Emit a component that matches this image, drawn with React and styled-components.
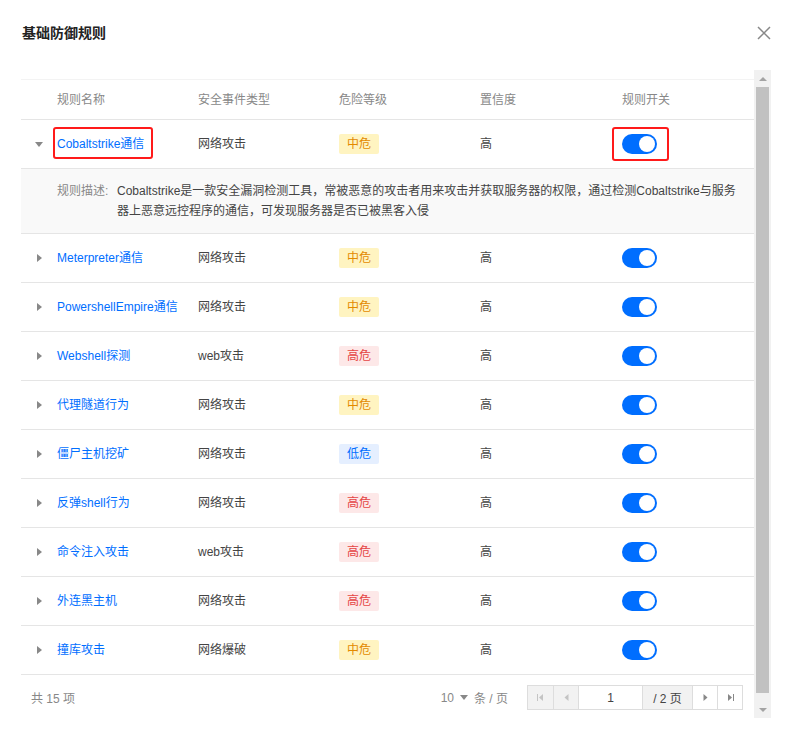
import React from 'react';
import styled, { createGlobalStyle, css } from 'styled-components';

const GlobalStyle = createGlobalStyle`
  html, body {
    margin: 0;
    padding: 0;
    background: #fff;
  }
  body {
    font-family: "Liberation Sans", "Noto Sans CJK SC", sans-serif;
    font-size: 12px;
    color: #333;
  }
`;

const Dialog = styled.div`
  width: 793px;
  height: 741px;
  box-sizing: border-box;
  padding: 0 22px 0 21px;
  background: #fff;
  overflow: hidden;
`;

const Header = styled.div`
  height: 66px;
  display: flex;
  align-items: center;
  justify-content: space-between;
  padding-left: 1px;
  margin-bottom: 4px;
`;

const Title = styled.h3`
  margin: 0;
  font-size: 14px;
  font-weight: bold;
  color: #222;
  line-height: 20px;
`;

const CloseBtn = styled.button`
  width: 14px;
  height: 14px;
  padding: 0;
  border: 0;
  background: none;
  display: flex;
  cursor: pointer;
`;

const Scroller = styled.div`
  height: 648px;
  display: flex;
`;

const ScrollContent = styled.div`
  flex: 1;
  min-width: 0;
  overflow: hidden;
`;

const ScrollBar = styled.div`
  width: 17px;
  display: flex;
  flex-direction: column;
  background: #f1f1f1;
`;

const ScrollArrow = styled.div`
  height: 17px;
  display: flex;
  align-items: center;
  justify-content: center;
`;

const ScrollTrack = styled.div`
  flex: 1;
  padding: 0 2px 8px;
  display: flex;
  flex-direction: column;
`;

const ScrollThumb = styled.div`
  flex: 1;
  background: #c1c1c1;
`;

const Table = styled.div`
  margin-top: 9px;
  border-top: 1px solid #f3f3f3;
`;

const Row = styled.div`
  display: grid;
  grid-template-columns: 36px 141px 141px 141px 142px 1fr;
  align-items: center;
  height: ${(p) => (p.head ? 39 : 48)}px;
  border-bottom: 1px solid #e5e5e5;
  color: ${(p) => (p.head ? '#888' : '#444')};
  line-height: 16px;
`;

const Cell = styled.div`
  display: flex;
  align-items: center;
  min-width: 0;
  white-space: nowrap;
`;

const ArrowCell = styled(Cell)`
  justify-content: flex-end;
  padding-right: 15px;
`;

const Caret = styled.span`
  width: 0;
  height: 0;
  ${(p) =>
    p.open
      ? css`
          border-top: 5px solid #888;
          border-left: 4px solid transparent;
          border-right: 4px solid transparent;
          margin-right: -1px;
        `
      : css`
          border-left: 5px solid #888;
          border-top: 4px solid transparent;
          border-bottom: 4px solid transparent;
        `}
`;

const Marked = styled.span`
  position: relative;
  display: inline-flex;

  &::after {
    content: '';
    position: absolute;
    left: ${(p) => p.l}px;
    right: ${(p) => p.r}px;
    top: ${(p) => p.t}px;
    bottom: ${(p) => p.b}px;
    border: 2px solid #ff1a1a;
    border-radius: 3px;
    pointer-events: none;
  }
`;

const NameLink = styled.a`
  color: #006eff;
  text-decoration: none;
  cursor: pointer;
`;

const levelColors = {
  中危: { bg: '#fff4c1', fg: '#e38a00' },
  高危: { bg: '#fde8e8', fg: '#e54545' },
  低危: { bg: '#e5efff', fg: '#006eff' },
};

const Tag = styled.span`
  display: inline-block;
  width: 40px;
  height: 20px;
  line-height: 20px;
  text-align: center;
  border-radius: 2px;
  background: ${(p) => levelColors[p.level].bg};
  color: ${(p) => levelColors[p.level].fg};
`;

const Switch = styled.span`
  display: inline-block;
  position: relative;
  width: 35px;
  height: 20px;
  border-radius: 10px;
  background: #006eff;
  cursor: pointer;

  &::after {
    content: '';
    position: absolute;
    top: 2px;
    right: 2px;
    width: 16px;
    height: 16px;
    border-radius: 50%;
    background: #fff;
  }
`;

const Detail = styled.div`
  display: flex;
  background: #f9f9f9;
  border-bottom: 1px solid #e5e5e5;
  padding: 12px 16px 12px 36px;
  line-height: 20px;
  color: #444;
`;

const DetailLabel = styled.span`
  flex: 0 0 60px;
  color: #888;
`;

const DetailText = styled.span`
  flex: 1;
`;

const Footer = styled.div`
  display: flex;
  align-items: center;
  justify-content: space-between;
  padding: 10px 11px 17px 10px;
  color: #888;
`;

const PagerArea = styled.div`
  display: flex;
  align-items: center;
  gap: 19px;
`;

const PageSize = styled.span`
  display: inline-flex;
  align-items: center;
  gap: 6px;
  color: #888;
`;

const SizeCaret = styled.span`
  width: 0;
  height: 0;
  border-top: 5px solid #888;
  border-left: 4px solid transparent;
  border-right: 4px solid transparent;
`;

const Pager = styled.div`
  display: flex;
  height: 25px;
  border: 1px solid #ddd;
  box-sizing: border-box;
`;

const PagerBtn = styled.span`
  width: ${(p) => p.w || 25}px;
  box-sizing: border-box;
  display: flex;
  align-items: center;
  justify-content: center;
  background: ${(p) => (p.disabled || p.gray ? '#f2f2f2' : '#fff')};
  border-left: ${(p) => (p.first ? 'none' : '1px solid #ddd')};
  color: #444;
  font-size: 12px;
`;

const rules = [
  { name: 'Meterpreter通信', type: '网络攻击', level: '中危' },
  { name: 'PowershellEmpire通信', type: '网络攻击', level: '中危' },
  { name: 'Webshell探测', type: 'web攻击', level: '高危' },
  { name: '代理隧道行为', type: '网络攻击', level: '中危' },
  { name: '僵尸主机挖矿', type: '网络攻击', level: '低危' },
  { name: '反弹shell行为', type: '网络攻击', level: '高危' },
  { name: '命令注入攻击', type: 'web攻击', level: '高危' },
  { name: '外连黑主机', type: '网络攻击', level: '高危' },
  { name: '撞库攻击', type: '网络爆破', level: '中危' },
];

const Tri = ({ dir, color, bar }) => (
  <svg width="9" height="9" viewBox="0 0 9 9">
    {dir === 'left' ? (
      <>
        {bar && <rect x="1" y="1" width="1" height="7" fill={color} />}
        <path d={bar ? 'M7 1 L3 4.5 L7 8 Z' : 'M6.5 1 L2.5 4.5 L6.5 8 Z'} fill={color} />
      </>
    ) : (
      <>
        <path d={bar ? 'M2 1 L6 4.5 L2 8 Z' : 'M2.5 1 L6.5 4.5 L2.5 8 Z'} fill={color} />
        {bar && <rect x="7" y="1" width="1" height="7" fill={color} />}
      </>
    )}
  </svg>
);

const ScrollTri = ({ up }) => (
  <svg width="8" height="4" viewBox="0 0 8 4">
    <path d={up ? 'M0 4 L4 0 L8 4 Z' : 'M0 0 L4 4 L8 0 Z'} fill="#a3a3a3" />
  </svg>
);

export default function App() {
  return (
    <>
      <GlobalStyle />
      <Dialog>
        <Header>
          <Title>基础防御规则</Title>
          <CloseBtn aria-label="关闭">
            <svg width="14" height="14" viewBox="0 0 14 14">
              <path d="M1 1 L13 13 M13 1 L1 13" stroke="#888" strokeWidth="1.5" />
            </svg>
          </CloseBtn>
        </Header>

        <Scroller>
          <ScrollContent>
            <Table>
              <Row head>
                <Cell />
                <Cell>规则名称</Cell>
                <Cell>安全事件类型</Cell>
                <Cell>危险等级</Cell>
                <Cell>置信度</Cell>
                <Cell>规则开关</Cell>
              </Row>

              <Row>
                <ArrowCell>
                  <Caret open />
                </ArrowCell>
                <Cell>
                  <Marked l={-4} r={-9} t={-9} b={-7}>
                    <NameLink>Cobaltstrike通信</NameLink>
                  </Marked>
                </Cell>
                <Cell>网络攻击</Cell>
                <Cell>
                  <Tag level="中危">中危</Tag>
                </Cell>
                <Cell>高</Cell>
                <Cell>
                  <Marked l={-10} r={-12} t={-7} b={-7}>
                    <Switch />
                  </Marked>
                </Cell>
              </Row>
              <Detail>
                <DetailLabel>规则描述:</DetailLabel>
                <DetailText>
                  Cobaltstrike是一款安全漏洞检测工具，常被恶意的攻击者用来攻击并获取服务器的权限，通过检测Cobaltstrike与服务器上恶意远控程序的通信，可发现服务器是否已被黑客入侵
                </DetailText>
              </Detail>

              {rules.map((r) => (
                <Row key={r.name}>
                  <ArrowCell>
                    <Caret />
                  </ArrowCell>
                  <Cell>
                    <NameLink>{r.name}</NameLink>
                  </Cell>
                  <Cell>{r.type}</Cell>
                  <Cell>
                    <Tag level={r.level}>{r.level}</Tag>
                  </Cell>
                  <Cell>高</Cell>
                  <Cell>
                    <Switch />
                  </Cell>
                </Row>
              ))}
            </Table>

            <Footer>
              <span>共 15 项</span>
              <PagerArea>
                <PageSize>
                  10 <SizeCaret /> 条 / 页
                </PageSize>
                <Pager>
                  <PagerBtn first disabled>
                    <Tri dir="left" bar color="#c4c4c4" />
                  </PagerBtn>
                  <PagerBtn disabled>
                    <Tri dir="left" color="#c4c4c4" />
                  </PagerBtn>
                  <PagerBtn w={64}>1</PagerBtn>
                  <PagerBtn w={50} gray>
                    / 2 页
                  </PagerBtn>
                  <PagerBtn>
                    <Tri dir="right" color="#888" />
                  </PagerBtn>
                  <PagerBtn>
                    <Tri dir="right" bar color="#888" />
                  </PagerBtn>
                </Pager>
              </PagerArea>
            </Footer>
          </ScrollContent>

          <ScrollBar>
            <ScrollArrow>
              <ScrollTri up />
            </ScrollArrow>
            <ScrollTrack>
              <ScrollThumb />
            </ScrollTrack>
            <ScrollArrow>
              <ScrollTri />
            </ScrollArrow>
          </ScrollBar>
        </Scroller>
      </Dialog>
    </>
  );
}
